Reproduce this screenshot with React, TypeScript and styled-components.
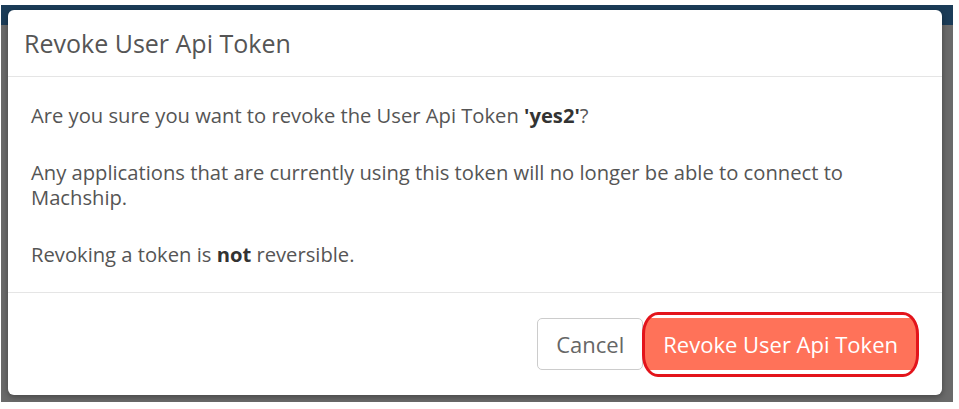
import styled, { createGlobalStyle } from "styled-components";

const GlobalStyle = createGlobalStyle`
  html, body {
    margin: 0;
    padding: 0;
    background: #ffffff;
  }
  body {
    font-family: "Open Sans", "Noto Sans", sans-serif;
  }
`;

const Backdrop = styled.div`
  box-sizing: border-box;
  margin: 5px 0 0 1px;
  width: 952px;
  height: 397px;
  padding: 5px 11px 7px 7px;
  background: linear-gradient(#1b3c58 0 20px, #6a6a6a 20px);
  display: flex;
`;

const Modal = styled.div`
  flex: 1;
  display: flex;
  flex-direction: column;
  background: #ffffff;
  border-radius: 6px;
  box-shadow: 0 2px 6px rgba(0, 0, 0, 0.35);
  overflow: hidden;
`;

const Header = styled.div`
  height: 67px;
  box-sizing: border-box;
  display: flex;
  align-items: center;
  padding: 0 16px;
  border-bottom: 1px solid #e5e5e5;
`;

const Title = styled.h4`
  margin: 0;
  font-size: 25px;
  font-weight: 400;
  color: #555555;
`;

const Body = styled.div`
  padding: 26px 50px 25px 23px;
  border-bottom: 1px solid #e5e5e5;
  font-size: 20.2px;
  line-height: 25px;
  color: #555555;
`;

const Paragraph = styled.p`
  margin: 0 0 32px;
  &:last-child {
    margin-bottom: 0;
  }
  strong {
    color: #333333;
    font-weight: 700;
  }
`;

const Footer = styled.div`
  flex: 1;
  display: flex;
  justify-content: flex-end;
  align-items: center;
  gap: 2px;
  padding: 0 26px 0 0;
`;

const Button = styled.button<{ $primary?: boolean }>`
  position: relative;
  box-sizing: border-box;
  height: 52px;
  padding: 0 ${(p) => (p.$primary ? "17px" : "18px")};
  font-family: "Open Sans", "Noto Sans", sans-serif;
  font-size: 22px;
  border-radius: 5px;
  cursor: pointer;
  color: ${(p) => (p.$primary ? "#ffffff" : "#666666")};
  background: ${(p) => (p.$primary ? "#ff7259" : "#ffffff")};
  border: 1px solid ${(p) => (p.$primary ? "#ff7259" : "#cccccc")};

  ${(p) =>
    p.$primary &&
    `
    &::after {
      content: "";
      position: absolute;
      left: -4px;
      right: -4px;
      top: -7px;
      bottom: -8px;
      border: 3px solid #e3141b;
      border-radius: 16px / 22px;
      pointer-events: none;
    }
  `}
`;

export default function App() {
  return (
    <>
      <GlobalStyle />
      <Backdrop>
        <Modal>
          <Header>
            <Title>Revoke User Api Token</Title>
          </Header>
          <Body>
            <Paragraph>
              Are you sure you want to revoke the User Api Token{" "}
              <strong>'yes2'</strong>?
            </Paragraph>
            <Paragraph>
              Any applications that are currently using this token will no
              longer be able to connect to Machship.
            </Paragraph>
            <Paragraph>
              Revoking a token is <strong>not</strong> reversible.
            </Paragraph>
          </Body>
          <Footer>
            <Button>Cancel</Button>
            <Button $primary>Revoke User Api Token</Button>
          </Footer>
        </Modal>
      </Backdrop>
    </>
  );
}
